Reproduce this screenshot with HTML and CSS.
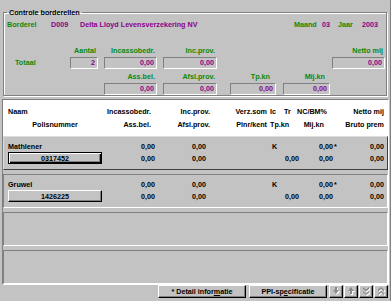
FILE: index.html
```html
<!DOCTYPE html>
<html lang="nl">
  <head>
    <meta charset="UTF-8" />
    <meta name="viewport" content="width=device-width, initial-scale=1.0" />
    <title>Controle borderellen</title>
    <link rel="stylesheet" href="styles.css">
  </head>
  <body>
    <div class="window">
      <fieldset class="group">
        <legend>Controle borderellen</legend>
        <div class="info">
          <span class="green">Borderel</span>
          <span class="purple">D009</span>
          <span class="purple">Delta Lloyd Levensverzekering NV</span>
          <span class="green">Maand</span>
          <span class="purple">03</span>
          <span class="green">Jaar</span>
          <span class="purple">2003</span>
        </div>

        <div class="totals">
          <span class="green cap c-aantal">Aantal</span>
          <span class="green cap c-inc">Incassobedr.</span>
          <span class="green cap c-prov">Inc.prov.</span>
          <span class="green cap c-netto">Netto mij</span>

          <span class="green totaal">Totaal</span>
          <span class="field c-aantal">2</span>
          <span class="field c-inc">0,00</span>
          <span class="field c-prov">0,00</span>
          <span class="field c-netto">0,00</span>

          <span class="green cap c-inc">Ass.bel.</span>
          <span class="green cap c-prov">Afsl.prov.</span>
          <span class="green cap c-tp">Tp.kn</span>
          <span class="green cap c-mij">Mij.kn</span>

          <span class="field c-inc">0,00</span>
          <span class="field c-prov">0,00</span>
          <span class="field c-tp">0,00</span>
          <span class="field c-mij">0,00</span>
        </div>
      </fieldset>

      <div class="list">
        <div class="list-head">
          <span class="h-name">Naam</span>
          <span class="h-r">Incassobedr.</span>
          <span class="h-r">Inc.prov.</span>
          <span class="h-r">Verz.som</span>
          <span class="h-ictr"><span>Ic</span><span>Tr</span></span>
          <span class="h-r">NC/BM%</span>
          <span class="h-r">Netto mij</span>

          <span class="h-polis">Polisnummer</span>
          <span class="h-r">Ass.bel.</span>
          <span class="h-r">Afsl.prov.</span>
          <span class="h-r">Plnr/kent</span>
          <span class="h-l">Tp.kn</span>
          <span class="h-r">Mij.kn</span>
          <span class="h-r">Bruto prem</span>
        </div>

        <div class="rec current">
          <span class="r-name">Mathlener</span>
          <span class="r-num">0,00</span>
          <span class="r-num">0,00</span>
          <span></span>
          <span class="r-k">K</span>
          <span class="r-num">0,00<span class="star">*</span></span>
          <span class="r-num">0,00</span>

          <span class="btn polis default">0317452</span>
          <span class="r-num">0,00</span>
          <span class="r-num">0,00</span>
          <span></span>
          <span class="r-num">0,00</span>
          <span class="r-num pad-star">0,00</span>
          <span class="r-num">0,00</span>
        </div>

        <div class="rec">
          <span class="r-name">Gruwel</span>
          <span class="r-num">0,00</span>
          <span class="r-num">0,00</span>
          <span></span>
          <span class="r-k">K</span>
          <span class="r-num">0,00<span class="star">*</span></span>
          <span class="r-num">0,00</span>

          <span class="btn polis">1426225</span>
          <span class="r-num">0,00</span>
          <span class="r-num">0,00</span>
          <span></span>
          <span class="r-num">0,00</span>
          <span class="r-num pad-star">0,00</span>
          <span class="r-num">0,00</span>
        </div>

        <div class="rec"></div>
        <div class="rec"></div>
      </div>

      <div class="toolbar">
        <span class="btn wide-detail">* Detail infor<u>m</u>atie</span>
        <span class="btn wide-ppi">PPI-sp<u>e</u>cificatie</span>
        <span class="btn nav">
          <svg width="9" height="9" viewBox="0 0 9 9">
            <path d="M4 1h2v3h2l-3 4l-3-4h2z" fill="#fff" />
            <path d="M3 0h2v3h2l-3 4l-3-4h2z" fill="#8a8a8a" />
          </svg>
        </span>
        <span class="btn nav">
          <svg width="9" height="9" viewBox="0 0 9 9">
            <path d="M5 1l3 4h-2v3h-2v-3h-2z" fill="#fff" />
            <path d="M4 0l3 4h-2v3h-2v-3h-2z" fill="#8a8a8a" />
          </svg>
        </span>
        <span class="btn nav">
          <svg width="9" height="9" viewBox="0 0 9 9">
            <path d="M2 1l3 2.5l3-2.5v2l-3 2.5l-3-2.5zM2 5l3 2.5l3-2.5v1.5l-3 2.5l-3-2.5z" fill="#fff" />
            <path d="M1 0l3 2.5l3-2.5v2l-3 2.5l-3-2.5zM1 4l3 2.5l3-2.5v1.5l-3 2.5l-3-2.5z" fill="#8a8a8a" />
          </svg>
        </span>
        <span class="btn nav">
          <svg width="9" height="9" viewBox="0 0 9 9">
            <path d="M2 3.5l3-2.5l3 2.5v2l-3-2.5l-3 2.5zM2 7.5l3-2.5l3 2.5v1.5l-3-2.5l-3 2.5z" fill="#fff" />
            <path d="M1 2.5l3-2.5l3 2.5v2l-3-2.5l-3 2.5zM1 6.5l3-2.5l3 2.5v1.5l-3-2.5l-3 2.5z" fill="#8a8a8a" />
          </svg>
        </span>
      </div>
    </div>
  </body>
</html>
```

FILE: styles.css
```css
* {
  box-sizing: border-box;
}

body {
  margin: 0;
  background-color: #c3c3c3;
  color: #000;
  font-family: "Liberation Sans", Arial, sans-serif;
  font-size: 7.2px;
  font-weight: bold;
  line-height: 9px;
}

.window {
  width: 391px;
  height: 301px;
  overflow: hidden;
  border-right: 1px solid #808080;
}

.green {
  color: #0a8a0a;
}

.purple {
  color: #8a008a;
}

/* top group box */

.group {
  margin: 8px 3px 0 3px;
  padding: 3px 2px 1px 3px;
  border: 1px solid #808080;
  box-shadow: inset 1px 1px #fff, 1px 1px #fff;
  min-width: 0;
}

.group legend {
  padding: 0 2px;
  line-height: 9px;
}

.info {
  display: grid;
  grid-template-columns: 44px 29px 214px 28px 16px 24px auto;
  height: 9px;
}

.totals {
  display: grid;
  margin-top: 17px;
  grid-template-columns: 63px 28px 6px 53px 6px 54px 13px 46px 7px 47px 2px 53px;
  grid-template-rows: 9px 12px 9px 12px;
  row-gap: 2px;
}

.totals > :nth-child(n + 10) {
  margin-top: 1px;
}

.c-aantal {
  grid-column: 2;
}

.c-inc {
  grid-column: 4;
}

.c-prov {
  grid-column: 6;
}

.c-tp {
  grid-column: 8;
}

.c-mij {
  grid-column: 10;
}

.c-netto {
  grid-column: 12;
}

.cap {
  text-align: right;
  padding-right: 2px;
}

.cap.c-tp {
  padding-right: 6px;
}

.cap.c-mij {
  padding-right: 5px;
}

.totaal {
  grid-column: 1;
  padding-left: 8px;
  line-height: 12px;
}

.field {
  height: 12px;
  line-height: 10px;
  padding-right: 2px;
  text-align: right;
  color: #8a008a;
  border: 1px solid;
  border-color: #808080 #fff #fff #808080;
}

/* record list */

.list {
  margin: 3px 1px 0 2px;
  border: 1px solid;
  border-color: #808080 #fff #fff #808080;
}

.list-head {
  display: grid;
  height: 36px;
  padding: 7px 0 0 5px;
  background-color: #fff;
  grid-template-columns: 94px 49px 59px 57px 30px 27px 60px;
  grid-template-rows: 13px 13px;
}

.h-r {
  text-align: right;
}

.h-l {
  padding-left: 3px;
}

.h-polis {
  text-align: center;
}

.h-ictr {
  display: flex;
  gap: 8px;
  padding-left: 3px;
}

.rec {
  display: grid;
  height: 34px;
  margin-bottom: 4px;
  padding: 4px 0 0 4px;
  border: 1px solid;
  border-color: #808080 #fff #fff #808080;
  grid-template-columns: 94px 53px 51px 62px 31px 43px 42px;
  grid-template-rows: 10px 12px;
  row-gap: 1px;
  align-items: center;
}

.rec:last-child {
  margin-bottom: 0;
}

.rec.current {
  border-color: #dcdcdc #404040 #404040 #dcdcdc;
}

.r-num {
  text-align: right;
}

.r-k {
  padding-left: 4px;
}

.star {
  display: inline-block;
  width: 9px;
  text-align: left;
  padding-left: 1px;
  vertical-align: top;
}

.pad-star {
  padding-right: 9px;
}

/* buttons */

.btn {
  display: flex;
  align-items: center;
  justify-content: center;
  height: 13px;
  background-color: #c3c3c3;
  border: 1px solid;
  border-color: #fff #000 #000 #fff;
  box-shadow: inset -1px -1px #808080;
}

.btn u {
  text-decoration-thickness: 1px;
}

.polis {
  width: 94px;
  height: 12px;
}

.polis.default {
  border-color: #000;
  box-shadow: inset 1px 1px #fff, inset -1px -1px #000, inset -2px -2px #808080;
}

.toolbar {
  display: flex;
  justify-content: flex-end;
  gap: 3px;
  padding-right: 2px;
}

.wide-detail {
  width: 88px;
}

.wide-ppi {
  width: 78px;
  margin-right: 1px;
}

.nav {
  width: 14px;
  margin-left: -2px;
}
```
